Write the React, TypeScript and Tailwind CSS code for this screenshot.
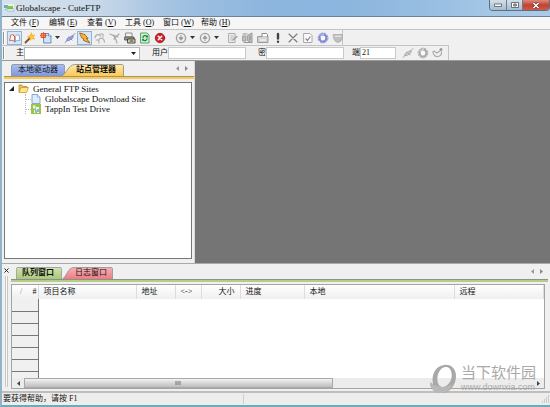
import React, { ReactNode } from 'react'
import clsx from 'clsx'

type IconProps = { children: ReactNode; label: string; active?: boolean; className?: string }

const menus = [
  ['文件', 'F'],
  ['编辑', 'E'],
  ['查看', 'V'],
  ['工具', 'O'],
  ['窗口', 'W'],
  ['帮助', 'H'],
]

const columns = [
  { title: '项目名称', width: 'w-[98px]', align: 'text-left' },
  { title: '地址', width: 'w-[39px]', align: 'text-left' },
  { title: '<->', width: 'w-[26px]', align: 'text-left' },
  { title: '大小', width: 'w-[39px]', align: 'text-right' },
  { title: '进度', width: 'w-[64px]', align: 'text-left' },
  { title: '本地', width: 'w-[150px]', align: 'text-left' },
  { title: '远程', width: '', align: 'text-left' },
]

const rows = [1, 2, 3, 4, 5, 6, 7]

const ToolButton = ({ children, label, active, className = 'w-[15px]' }: IconProps) => (
  <button
    aria-label={label}
    className={clsx(
      'flex h-[14px] shrink-0 items-center justify-center',
      active && 'border border-[#8fb3d9] bg-[#dbe7f5]',
      className,
    )}
  >
    <svg viewBox="0 0 12 12" className="h-3 w-3 shrink-0" fill="none" strokeLinecap="round">
      {children}
    </svg>
  </button>
)

const Drop = ({ label }: { label: string }) => (
  <button aria-label={label} className="flex h-[14px] w-[9px] shrink-0 items-center justify-center">
    <svg viewBox="0 0 5 3" className="h-[3px] w-[5px]">
      <path d="M0 0h5L2.5 3z" fill="#333" />
    </svg>
  </button>
)

const Grip = () => <span className="ml-px h-3 w-[2px] shrink-0 border-l border-[#8c9299] bg-white" />

const PlugIcon = ({ color, light }: { color: string; light: string }) => (
  <>
    <path d="M1 10.500l2.500-2.300M8.500 4l2.500-2.500" stroke={color} strokeWidth="1" />
    <path d="M3 8.500C2.500 6 4.500 5.500 6 5c1-.5 2-1.500 3-1.500C9.500 6 8 7 6.500 7.500 5.500 8.500 4 9 3 8.500z" fill={light} stroke={color} strokeWidth="1" />
    <path d="M5 5l3 3" stroke={color} strokeWidth="1" />
  </>
)

const GearIcon = ({ color, light }: { color: string; light: string }) => (
  <>
    <circle cx="6" cy="6" r="4.900" stroke={color} strokeWidth="1" strokeDasharray="1.500 1.500" />
    <ellipse cx="6" cy="6" rx="3.300" ry="3.600" fill="#fafafa" stroke={color} strokeWidth="2" />
    <path d="M3.300 4.500A3 3.300 0 0 1 6.500 2.400" stroke={light} strokeWidth="1" />
  </>
)

const TabArrows = () => (
  <div className="ml-auto flex h-full items-center gap-[6px]">
    <button aria-label="向左" className="flex">
      <svg viewBox="0 0 3 5" className="h-[5px] w-[3px]">
        <path d="M3 0v5L0 2.500z" fill="#999" />
      </svg>
    </button>
    <button aria-label="向右" className="flex">
      <svg viewBox="0 0 3 5" className="h-[5px] w-[3px]">
        <path d="M0 0v5l3-2.500z" fill="#888" />
      </svg>
    </button>
  </div>
)

type TabProps = { text: string; from: string; to: string; bold?: boolean; slant?: boolean; className: string }

const Tab = ({ text, from, to, bold, slant, className }: TabProps) => (
  <button
    role="tab"
    aria-selected={!!bold}
    className={clsx('relative flex h-3 items-center whitespace-nowrap leading-3', bold && 'font-bold', className)}
  >
    <svg viewBox="0 0 60 12" preserveAspectRatio="none" className="absolute inset-0 h-full w-full">
      <defs>
        <linearGradient id={'tab' + from} x1="0" y1="0" x2="0" y2="1">
          <stop offset="0" stopColor={'#' + from} />
          <stop offset="1" stopColor={'#' + to} />
        </linearGradient>
      </defs>
      <path
        d={slant ? 'M.5 12C5 10 7 1 13 .5H58.500l1 1V12' : 'M.5 12V1.500l1-1H58.500l1 1V12'}
        fill={`url(#tab${from})`}
        stroke="#8a8a8a"
        strokeWidth=".8"
      />
    </svg>
    <span className="relative">{text}</span>
  </button>
)

const TitleBar = () => (
  <header className="flex h-4 shrink-0 items-start bg-linear-to-r from-[#c9d9e8] via-[#93b9de] to-[#a9cbe8]">
    <div className="flex h-4 items-center gap-[2px] bg-linear-to-r from-[#d5e1ec] via-[#cddceb] to-transparent pl-[2px] pr-12">
      <svg viewBox="0 0 10 8" className="h-2 w-[10px]">
        <path d="M0 0h10v5H0z" fill="#e9f3e2" />
        <path d="M0 1h4v3H0z" fill="#6fa9cf" />
        <path d="M3 2h6v3H3z" fill="#8bc34a" />
        <path d="M1 5h9v2H4z" fill="#fff" stroke="#5a8ca8" strokeWidth=".5" />
      </svg>
      <h1 className="whitespace-nowrap text-[9px]">Globalscape - CuteFTP</h1>
    </div>
    <div className="h-4 flex-1 bg-linear-to-r from-transparent via-[#8bb5de] to-transparent" />
    <div className="flex h-[11px] overflow-hidden rounded-b-sm border border-t-0 border-[#5d6f80]">
      <button
        aria-label="最小化"
        className="flex w-[17px] items-center justify-center border-r border-[#6b7d8e] bg-linear-to-b from-[#d3dfe9] to-[#a6bccf]"
      >
        <svg viewBox="0 0 8 4" className="h-1 w-2">
          <path d="M.5 1h7v2.500h-7z" fill="#fff" stroke="#555" strokeWidth=".8" />
        </svg>
      </button>
      <button
        aria-label="最大化"
        className="flex w-4 items-center justify-center border-r border-[#6b7d8e] bg-linear-to-b from-[#d3dfe9] to-[#a6bccf]"
      >
        <svg viewBox="0 0 8 6" className="h-[6px] w-2">
          <path d="M.5.5h7v5h-7z" fill="#fff" stroke="#555" strokeWidth=".8" />
          <path d="M2.700 2h2.600v2H2.700z" fill="#a6bccf" stroke="#555" strokeWidth=".8" />
        </svg>
      </button>
      <button
        aria-label="关闭"
        className="flex w-[26px] items-center justify-center bg-linear-to-b from-[#dc8a7c] via-[#c4402f] to-[#cf5a45]"
      >
        <svg viewBox="0 0 8 7" className="h-[7px] w-2">
          <path d="M1.500 1l5 5M6.500 1l-5 5" stroke="#5c2a25" strokeWidth="2.600" />
          <path d="M1.500 1l5 5M6.500 1l-5 5" stroke="#fff" strokeWidth="1.600" />
        </svg>
      </button>
    </div>
  </header>
)

const Toolbar = () => (
  <div className="flex h-[15px] w-[341px] items-center border-r border-[#c4c4c4]">
    <Grip />
    <ToolButton label="站点管理器" active className="ml-[2px] w-[15px]">
      <path d="M2 3c2-1 3 0 4 1.500V10C5 8.500 3 8 1 8.500z" fill="#fff" stroke="#c9714e" strokeWidth="1" />
      <path d="M6 4.500C7 3 8.500 2.500 10 3l1 5.500C9 8 7.500 8.500 6 10z" fill="#fff" stroke="#7fa6d6" strokeWidth="1" />
      <path d="M4.500 3.500L6 5v4" stroke="#d2502f" />
    </ToolButton>
    <ToolButton label="连接向导">
      <path d="M1.500 10.500L6 6" stroke="#7a5230" strokeWidth="1.800" />
      <path d="M7.500 1l.8 2.400 2.700-.4-1.900 2 1.400 2.300-2.600-.8L6 8.500l-.1-2.700-2.500-1 2.500-1z" fill="#ffc627" stroke="#e69a10" strokeWidth=".5" />
    </ToolButton>
    <ToolButton label="新建" className="ml-px w-[15px]">
      <path d="M4 1.500h4.500L11 4v7H4z" fill="#cfe3fa" stroke="#5f86b5" strokeWidth=".9" />
      <path d="M8.500 1.500V4H11" fill="#fff" stroke="#5f86b5" strokeWidth=".8" />
      <path d="M1.500 1.500h4v4h-4z" fill="#f29b62" stroke="#d0532c" strokeWidth="1" />
      <path d="M3.500 0v7M0 3.500h7" stroke="#d9532f" strokeWidth=".7" />
    </ToolButton>
    <Drop label="新建选项" />
    <ToolButton label="连接">
      <PlugIcon color="#8288c4" light="#9fa6e0" />
    </ToolButton>
    <ToolButton label="快速连接" active>
      <path d="M1 1l5 1.500 3 4h-1.500L11 11 4.500 8.500V6.500L3 6z" fill="#ffb02e" stroke="#8a5a1c" strokeWidth=".8" />
    </ToolButton>
    <ToolButton label="断开连接">
      <path d="M1 5.500C2 2 5 2 6.500 4M5 7.500C7 5 10 6 10.500 10" stroke="#aaa" strokeWidth="1.200" />
      <path d="M6 2h3v3M2 8h3v3" stroke="#aaa" />
    </ToolButton>
    <ToolButton label="取消">
      <path d="M1 2l4 2 2 4 1 3M5 7l5-5M4 3l5 2" stroke="#a9a9a9" strokeWidth="1.200" />
    </ToolButton>
    <ToolButton label="打印">
      <path d="M2 1h6v4H2z" fill="#f4f4ee" stroke="#777" strokeWidth=".8" />
      <path d="M1 5h9v3H1z" fill="#98a48a" stroke="#444" strokeWidth=".8" />
      <path d="M4 7h7v4H4z" fill="#e4dfb0" stroke="#333" strokeWidth=".9" />
      <path d="M6 9h3" stroke="#333" />
    </ToolButton>
    <ToolButton label="刷新">
      <path d="M2 1h6l2 2v8H2z" fill="#d8f0dc" stroke="#419b58" strokeWidth=".9" />
      <path d="M4 5.500C4 3.500 7 3 8 4.500M8 6.800C8 8.700 5 9.200 4 7.700" stroke="#158a36" strokeWidth="1.300" />
      <path d="M8.800 3v2.500H6.500M3.300 9.200V6.800h2.200" fill="#158a36" />
    </ToolButton>
    <ToolButton label="停止">
      <circle cx="6" cy="6" r="4.700" fill="#cf2027" stroke="#8d1317" strokeWidth=".8" />
      <path d="M4.300 4.300l3.400 3.400M7.700 4.300L4.300 7.700" stroke="#fff" strokeWidth="1.500" />
    </ToolButton>
    <ToolButton label="下载" className="ml-[6px] w-[15px]">
      <circle cx="6" cy="6" r="4.600" fill="#eee" stroke="#a2a2a2" strokeWidth="1.400" />
      <path d="M6 3.500v3M4.300 6L6 8.200 7.700 6z" stroke="#999" fill="#999" strokeWidth="1" />
    </ToolButton>
    <Drop label="下载选项" />
    <ToolButton label="上传">
      <circle cx="6" cy="6" r="4.600" fill="#eee" stroke="#a2a2a2" strokeWidth="1.400" />
      <path d="M6 8.500v-3M4.300 6L6 3.800 7.700 6z" stroke="#999" fill="#999" strokeWidth="1" />
    </ToolButton>
    <Drop label="上传选项" />
    <ToolButton label="编辑" className="ml-1 w-[15px]">
      <path d="M2 1.500h6v9H2z" stroke="#aaa" />
      <path d="M3.500 4h3M3.500 6h3M3.500 8h2" stroke="#aaa" strokeWidth=".8" />
      <path d="M6 8l4-3.500" stroke="#999" strokeWidth="1.200" />
    </ToolButton>
    <ToolButton label="比较">
      <path d="M1 4h3v5H1zM6 3l4-2v10L6 9z" fill="#c0c0c0" stroke="#9a9a9a" />
      <path d="M1 2h4M2 10.500h6M8 4v4" stroke="#888" strokeWidth=".9" />
    </ToolButton>
    <ToolButton label="新建文件夹">
      <path d="M1 4.500h10v6H1z" fill="#d4d4d4" stroke="#999" />
      <path d="M5 4.500v-3h4.500l1 1v2" fill="#fff" stroke="#888" />
      <path d="M3.500 8h5" stroke="#fff" />
    </ToolButton>
    <ToolButton label="优先">
      <path d="M6 2v4.500" stroke="#444" strokeWidth="2.400" />
      <circle cx="6" cy="9.800" r="1.200" fill="#444" />
    </ToolButton>
    <ToolButton label="删除">
      <path d="M2 2l8 8M10 2l-8 8" stroke="#777" strokeWidth="1.100" />
    </ToolButton>
    <ToolButton label="属性">
      <path d="M2 1.500h6l2 2v7H2z" fill="#fafafa" stroke="#aaa" />
      <path d="M4 7l1.500 1.500L8 5" stroke="#888" strokeWidth="1.200" />
    </ToolButton>
    <ToolButton label="设置">
      <GearIcon color="#7e86d6" light="#c3c8f5" />
    </ToolButton>
    <ToolButton label="脚本">
      <path d="M1.500 2.500h9v3Q9.500 10 6 10.500 2.500 10 1.500 5.500z" fill="#c0c0c0" stroke="#aaa" strokeWidth=".8" />
      <path d="M3 4.200h6" stroke="#eee" />
    </ToolButton>
  </div>
)

const inputStyle = 'h-3 min-w-0 border border-[#c9c9c9] bg-white px-px text-[8px] leading-3 outline-none'

const QuickConnect = () => (
  <form className="flex h-[15px] w-[447px] items-center border-r border-t border-[#c4c4c4]">
    <Grip />
    <label htmlFor="host" className="ml-[11px] w-2">
      主
    </label>
    <div className="relative flex">
      <select id="host" className="h-[13px] w-[116px] appearance-none border border-[#b5b5b5] bg-white outline-none" />
      <svg viewBox="0 0 5 3" className="pointer-events-none absolute right-1 top-[5px] h-[3px] w-[5px]">
        <path d="M0 0h5L2.500 3z" fill="#222" />
      </svg>
    </div>
    <label htmlFor="user" className="ml-3 w-4 whitespace-nowrap">
      用户
    </label>
    <input id="user" className={clsx(inputStyle, 'w-[78px]')} />
    <label htmlFor="password" className="ml-3 w-2">
      密
    </label>
    <input id="password" type="password" className={clsx(inputStyle, 'w-[78px]')} />
    <label htmlFor="port" className="ml-2 w-2">
      端
    </label>
    <input id="port" defaultValue="21" className={clsx(inputStyle, 'w-9')} />
    <ToolButton label="连接主机" className="ml-1 w-[15px]">
      <PlugIcon color="#aaa" light="#ccc" />
    </ToolButton>
    <ToolButton label="连接设置">
      <GearIcon color="#aaa" light="#ddd" />
    </ToolButton>
    <ToolButton label="添加到站点">
      <path d="M1 4.500C1 8 3.500 10 6 9.500S10 7 9.500 5M2 4l3 2 3-2" stroke="#aaa" strokeWidth="1.200" />
      <circle cx="9" cy="2.500" r="1.500" fill="#999" />
    </ToolButton>
  </form>
)

const SitePane = () => (
  <aside className="flex w-[191px] shrink-0 flex-col border-r border-[#d8d8d8]">
    <div role="tablist" className="flex h-[15px] items-end pl-[7px] pr-[6px]">
      <Tab text="本地驱动器" from="a9bdf0" to="8099dc" className="w-[54px] pl-[7px]" />
      <Tab text="站点管理器" from="ffe9a8" to="fbc95a" bold slant className="-ml-1 w-[63px] pl-[15px]" />
      <TabArrows />
    </div>
    <div className="mb-[3px] h-[3px] border-t border-[#a89468] bg-[#f9c95c]" />
    <ul className="mr-[2px] flex-1 border border-[#777] bg-white pl-1 text-[9px] leading-[10px]">
      <li>
        <div className="flex h-[11px] items-center">
          <svg viewBox="0 0 5 5" className="h-[5px] w-[5px]">
            <path d="M5 0v5H0z" fill="#222" />
          </svg>
          <svg viewBox="0 0 11 9" className="ml-1 mr-1 h-[9px] w-[11px]">
            <path d="M1 8V1h3l1 1.500h4V4" fill="#f3c24a" stroke="#b98a2a" strokeWidth=".8" />
            <path d="M1 8.500l2-5h7.500l-2 5z" fill="#ffe48a" stroke="#c79a35" strokeWidth=".8" />
          </svg>
          General FTP Sites
        </div>
        <ul className="ml-4 border-l border-dotted border-[#bbb]">
          <li className="flex h-[10px] items-center">
            <span className="w-[5px] border-t border-dotted border-[#bbb]" />
            <svg viewBox="0 0 10 10" className="mr-1 h-[10px] w-[10px]">
              <path d="M1 .5h5.500L9 3v6.500H1z" fill="#dcecff" stroke="#7d9cc8" strokeWidth=".9" />
              <path d="M6.500.5V3H9" fill="#fff" stroke="#7d9cc8" strokeWidth=".8" />
            </svg>
            Globalscape Download Site
          </li>
          <li className="flex h-[10px] items-center">
            <span className="w-[5px] border-t border-dotted border-[#bbb]" />
            <svg viewBox="0 0 10 10" className="mr-1 h-[10px] w-[10px]">
              <path d="M0 0h10v10H0z" fill="#9cc544" />
              <path d="M2 1.500h2.500v3H2zM5 3h3v6H3V6h2z" fill="#e8f3fa" />
              <path d="M4.500 6h1v3h-1zM6.500 5h1v3h-1z" fill="#3683b5" />
            </svg>
            TappIn Test Drive
          </li>
        </ul>
      </li>
    </ul>
    <div className="h-1" />
  </aside>
)

const QueuePane = () => (
  <section className="flex shrink-0 border-t border-[#aaa] bg-[#f0f0f0]">
    <div className="flex w-[9px] shrink-0 flex-col items-center gap-[3px] pt-1">
      <button aria-label="关闭面板" className="flex">
        <svg viewBox="0 0 5 5" className="h-[5px] w-[5px]">
          <path d="M.5.5l4 4M4.500.5l-4 4" stroke="#222" />
        </svg>
      </button>
      <span className="mb-1 w-[3px] flex-1 border-x border-[#c6c6c6] bg-[#f8f8f8]" />
    </div>
    <div className="min-w-0 flex-1 pr-[2px]">
      <div role="tablist" className="flex h-[15px] items-end pl-[5px] pr-[5px]">
        <Tab text="队列窗口" from="d2e3ae" to="a9c77b" bold className="w-[46px] pl-[6px]" />
        <Tab text="日志窗口" from="f6b1b4" to="ea7d84" slant className="w-[51px] pl-[13px]" />
        <TabArrows />
      </div>
      <div className="mb-[2px] h-[3px] border-t border-[#8f8f8f] bg-[#b3cf86]" />
      <div className="mr-[3px] border border-[#a5a5a5] bg-white">
        <table className="w-full table-fixed border-collapse">
          <thead>
            <tr className="h-[14px] bg-linear-to-b from-white to-[#efefef]">
              <th className="w-[26px] border-r border-[#dcdcdc] p-0 font-normal leading-3">
                <span className="flex justify-between pl-2 pr-px">
                  <span className="text-[#888]">/</span>
                  <span>#</span>
                </span>
              </th>
              {columns.map(({ title, width, align }) => (
                <th
                  key={title}
                  className={clsx('border-r border-[#dcdcdc] px-[5px] py-0 font-normal leading-3', width, align)}
                >
                  {title}
                </th>
              ))}
            </tr>
          </thead>
          <tbody>
            {rows.map((row) => (
              <tr key={row} className={row === rows.length ? 'h-[7px]' : 'h-3'}>
                <td
                  className={clsx(
                    'border-r border-[#777] bg-[#f0f0f0] p-0',
                    row !== rows.length && 'border-b',
                  )}
                />
                <td colSpan={7} className="p-0" />
              </tr>
            ))}
          </tbody>
        </table>
        <div className="flex h-[10px] items-center bg-[#ececec]">
          <button aria-label="向左滚动" className="flex w-3 justify-center">
            <svg viewBox="0 0 3 5" className="h-[5px] w-[3px]">
              <path d="M3 0v5L0 2.500z" fill="#444" />
            </svg>
          </button>
          <div className="flex h-[10px] w-[58%] items-center justify-center border border-[#aaa] bg-linear-to-b from-[#f2f2f2] to-[#bdbdbd]">
            <svg viewBox="0 0 6 4" className="h-1 w-[6px]">
              <path d="M1 0v4M3 0v4M5 0v4" stroke="#777" />
            </svg>
          </div>
          <button aria-label="向右滚动" className="ml-auto flex w-3 justify-center">
            <svg viewBox="0 0 3 5" className="h-[5px] w-[3px]">
              <path d="M0 0v5l3-2.500z" fill="#444" />
            </svg>
          </button>
        </div>
      </div>
      <div className="h-[2px]" />
    </div>
  </section>
)

const Watermark = () => (
  <div className="pointer-events-none absolute bottom-[11px] right-[14px] flex items-center gap-1 text-[#a9a9a9]">
    <svg viewBox="0 0 28 30" className="h-[30px] w-7">
      <path
        fillRule="evenodd"
        d="M15 1C22 0 27 5 27 12c0 9-6 17-14 17C6 29 1 25 1 19l3 1C2 10 7 2 15 1zm1 2C10 4 7 13 9 19c1 4 5 5 8 3 5-3 7-10 5-15-1-3-3-4.500-6-4z"
        fill="#a8a8a8"
      />
      <path d="M1 18c5 5 14 7 23 2-3 6-7 9-12 9C6 29 1 25 1 18z" fill="#b8b8b8" />
    </svg>
    <div className="font-['Liberation_Sans','Noto_Sans_CJK_SC',sans-serif]">
      <p className="text-[15px] leading-4">当下软件园</p>
      <p className="text-[9px] leading-3">www.downxia.com</p>
    </div>
  </div>
)

const App = () => (
  <div className="relative flex h-screen flex-col overflow-hidden border-b-2 border-l-2 border-b-[#69adbb] border-l-[#8fb4cc] bg-[#f0f0f0] font-['Liberation_Serif','Noto_Sans_CJK_SC',serif] text-[8px] leading-3 text-[#111]">
    <TitleBar />
    <nav className="flex h-[14px] shrink-0 items-center gap-[10px] border-b border-t border-b-[#c4c4c4] border-t-[#6f8292] bg-[#f6f6f6] pl-[9px]">
      {menus.map(([name, key]) => (
        <button key={key} className="w-7 whitespace-nowrap text-left leading-3">
          {name} (<u>{key}</u>)
        </button>
      ))}
    </nav>
    <Toolbar />
    <QuickConnect />
    <div className="flex min-h-0 flex-1 border-t border-[#999] pl-[2px]">
      <SitePane />
      <main className="flex-1 bg-[#757575]" />
    </div>
    <QueuePane />
    <footer className="flex h-[14px] shrink-0 items-center border-t-2 border-[#bdbdbd] bg-[#efecec] pl-px">
      <p className="w-[240px]">要获得帮助，请按 F1</p>
      <span className="h-[10px] border-l border-[#cfcfcf]" />
      <svg viewBox="0 0 8 8" className="ml-auto h-2 w-2">
        <path d="M6 1h1M4 3h1M6 3h1M2 5h1M4 5h1M6 5h1M0 7h1M2 7h1M4 7h1M6 7h1" stroke="#aaa" />
      </svg>
    </footer>
    <Watermark />
  </div>
)

export default App
